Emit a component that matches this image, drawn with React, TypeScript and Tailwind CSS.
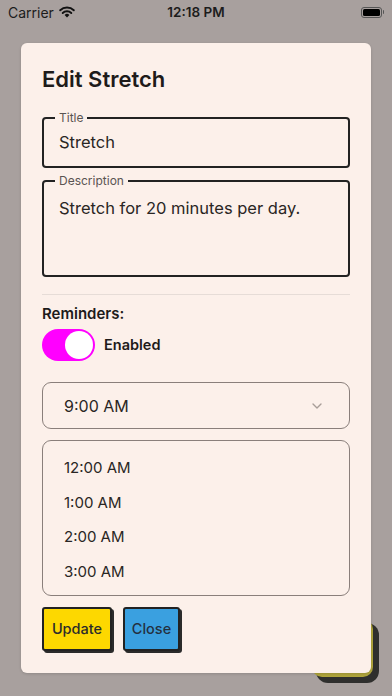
import { ChevronDown } from 'lucide-react';

const hours = ['12:00 AM', '1:00 AM', '2:00 AM', '3:00 AM'];

function StatusBar() {
  return (
    <div className="relative flex h-[22px] items-center justify-between pl-2 pr-[8px] text-[14px] text-[#1c1c1c]">
      <div className="flex items-center gap-[5px]">
        <span>Carrier</span>
        <svg width="16" height="12" viewBox="0 0 16 12">
          <path d="M8 11.5 L5.6 8.9 A3.4 3.4 0 0 1 10.4 8.9 Z" fill="#111" />
          <path d="M3.7 7 A6.2 6.2 0 0 1 12.3 7" stroke="#111" strokeWidth="1.9" fill="none" strokeLinecap="round" />
          <path d="M1.2 4.3 A9.8 9.8 0 0 1 14.8 4.3" stroke="#111" strokeWidth="1.9" fill="none" strokeLinecap="round" />
        </svg>
      </div>
      <span className="absolute left-1/2 -translate-x-1/2 text-[13.5px] font-semibold">12:18 PM</span>
      <div className="flex items-center">
        <div className="flex h-[11px] w-[21px] items-center rounded-[3px] border border-[#555] p-[1px]">
          <div className="h-full w-full rounded-[1.5px] bg-black" />
        </div>
        <div className="ml-[1px] h-[4px] w-[1.5px] rounded-r bg-[#555]" />
      </div>
    </div>
  );
}

function OutlinedField({ label, value, tall }: { label: string; value: string; tall?: boolean }) {
  return (
    <div
      className={`relative rounded-[4px] border-2 border-[#222] px-[15px] ${
        tall ? 'h-[97px] pt-[14px]' : 'flex h-[51px] items-center'
      }`}
    >
      <span className="absolute -top-[9px] left-[11px] bg-[#fcf0ea] px-[4px] text-[12px] leading-[16px] text-[#5a5452]">
        {label}
      </span>
      <span className="text-[16.5px] text-[#2a2624]">{value}</span>
    </div>
  );
}

export default function App() {
  return (
    <div
      className="relative h-[696px] w-[392px] overflow-hidden bg-[#a8a09e]"
      style={{ fontFamily: 'Inter, "Noto Sans", sans-serif' }}
    >
      <div className="pt-[1px]">
        <StatusBar />
      </div>

      {/* background FAB peeking behind the dialog */}
      <div className="absolute left-[316px] top-[623px] h-[60px] w-[63px] rounded-[12px] bg-[#2f2f2d]" />
      <div className="absolute left-[312px] top-[619px] h-[58px] w-[61px] rounded-[10px] bg-[#b0a53c]" />

      <div className="relative mx-[21px] mt-[20px] h-[630px] rounded-[6px] bg-[#fcf0ea] px-[21px] pt-[22px] shadow-[0_1px_3px_rgba(0,0,0,0.15)]">
        <h1 className="text-[22px] font-semibold leading-[28px] text-[#1e1b1a]">Edit Stretch</h1>

        <div className="mt-[24px] flex flex-col gap-[12px]">
          <OutlinedField label="Title" value="Stretch" />
          <OutlinedField label="Description" value="Stretch for 20 minutes per day." tall />
        </div>

        <div className="mt-[17px] h-px bg-[#e6dcd7]" />

        <div className="mt-[10px] text-[15px] font-semibold leading-[18px] text-[#1e1b1a]">Reminders:</div>
        <div className="mt-[6px] flex items-center gap-[9px]">
          <div className="flex h-[32px] w-[53px] items-center justify-end rounded-full bg-[#ff00ff] p-[2px]">
            <div className="h-[28px] w-[28px] rounded-full bg-white" />
          </div>
          <span className="text-[14.5px] font-semibold text-[#1e1b1a]">Enabled</span>
        </div>

        <div className="mt-[21px] flex h-[47px] items-center justify-between rounded-[9px] border border-[#8a7f7b] pl-[21px] pr-[24px]">
          <span className="text-[16px] text-[#2a2624]">9:00 AM</span>
          <ChevronDown className="h-[16px] w-[16px] text-[#a89d98]" strokeWidth={2} />
        </div>

        <div className="mt-[11px] flex h-[156px] flex-col rounded-[9px] border border-[#8a7f7b] pl-[21px] pt-[10px]">
          {hours.map((h) => (
            <div key={h} className="flex h-[34.5px] items-center text-[15px] text-[#2a2624]">
              {h}
            </div>
          ))}
        </div>

        <div className="mt-[11px] flex gap-[11px]">
          <button className="flex h-[44px] w-[70px] items-center justify-center rounded-[3px] border-2 border-[#222] bg-[#fdd800] text-[14.5px] font-medium text-[#2b2b2b] shadow-[2px_2px_0_#2b2b2b]">
            Update
          </button>
          <button className="flex h-[44px] w-[57px] items-center justify-center rounded-[3px] border-2 border-[#222] bg-[#3aa0e0] text-[14.5px] font-medium text-[#243040] shadow-[2px_2px_0_#2b2b2b]">
            Close
          </button>
        </div>
      </div>
    </div>
  );
}
